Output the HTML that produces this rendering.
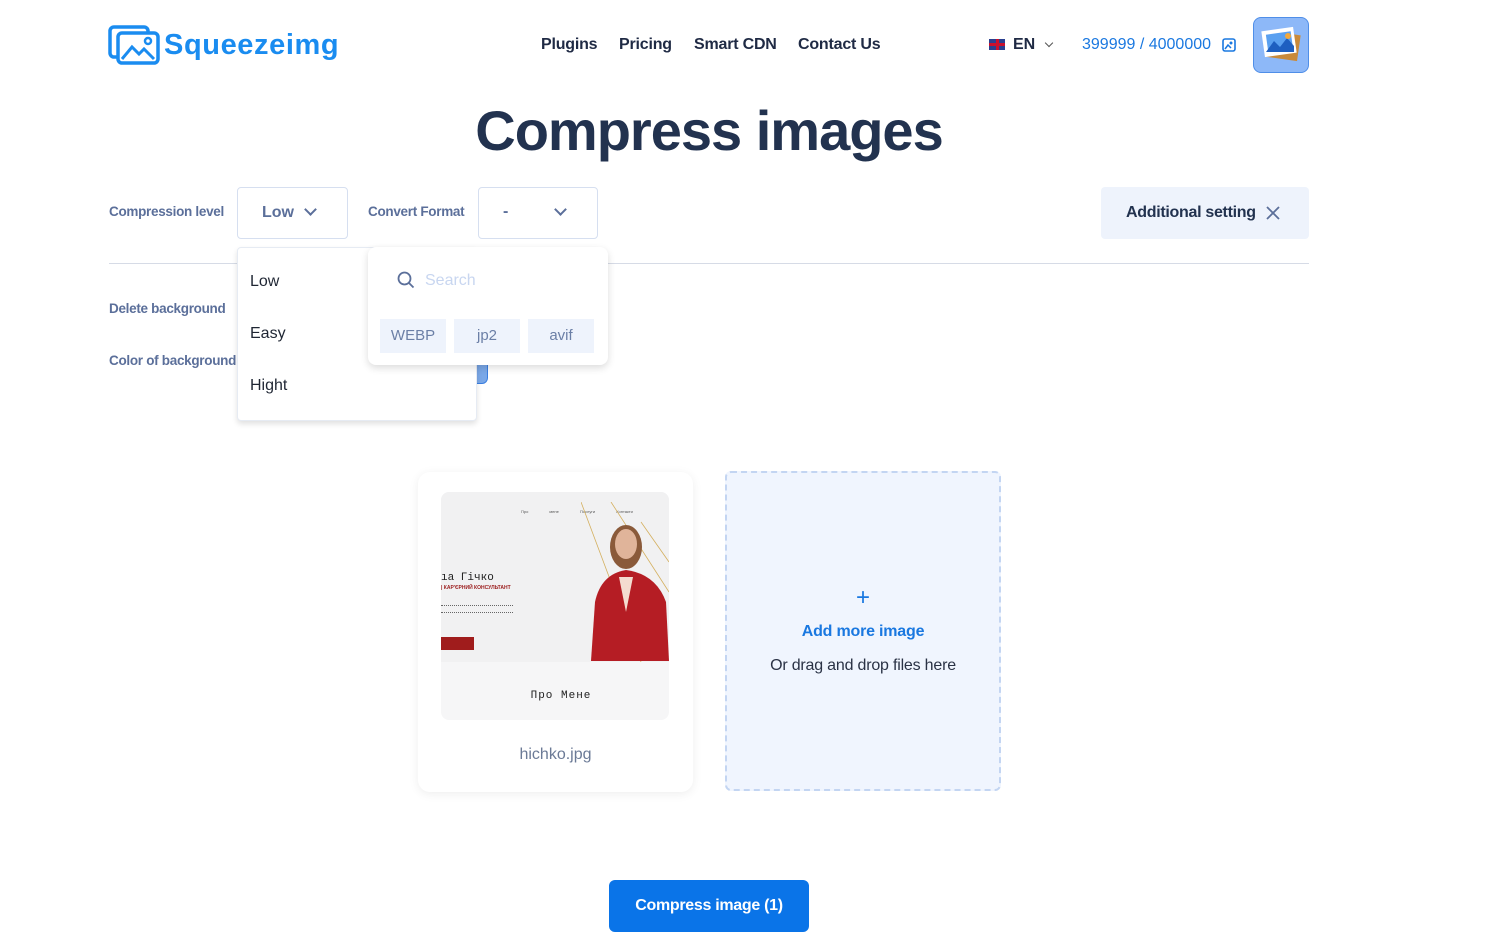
<!DOCTYPE html>
<html><head><meta charset="utf-8"><style>
*{box-sizing:border-box;margin:0;padding:0}
body{width:1486px;height:937px;background:#fff;font-family:"Liberation Sans",sans-serif;position:relative;overflow:hidden;color:#22304a}
.abs{position:absolute}
.nav a{position:absolute;top:36px;font-weight:bold;font-size:16px;color:#1f2a44;white-space:nowrap;letter-spacing:-0.2px}
.lbl{position:absolute;font-size:13.5px;color:#5b6f9a;font-weight:bold;white-space:nowrap;letter-spacing:-0.3px}
.sel{position:absolute;border:1px solid #d6dff0;border-radius:4px;background:#fff}
.chev{position:absolute;width:9px;height:9px;border-right:2px solid #5b6f9a;border-bottom:2px solid #5b6f9a;transform:rotate(45deg)}
.opt{position:absolute;left:12px;font-size:16px;color:#1f2633}
.tag{position:absolute;top:319px;width:66px;height:34px;background:#eef3fc;color:#6b7fa6;font-size:15px;text-align:center;line-height:34px}
</style></head><body>
<svg class="abs" style="left:108px;top:25px" width="52" height="40" viewBox="0 0 52 40"><rect x="2" y="2" width="38" height="30" rx="4" fill="none" stroke="#1a8cf0" stroke-width="3.5"/><rect x="10" y="8" width="40" height="30" rx="4" fill="#fff" stroke="#1a8cf0" stroke-width="3.5"/><path d="M14 34 L24 22 L31 29 L36 24 L46 34" fill="none" stroke="#1a8cf0" stroke-width="3"/><circle cx="40" cy="16" r="3" fill="none" stroke="#1a8cf0" stroke-width="2.5"/></svg>
<div class="abs" style="left:164px;top:29px;font-size:29px;font-weight:bold;color:#1a8cf0;letter-spacing:0.6px">Squeezeimg</div>
<div class="nav"><a style="left:541px">Plugins</a><a style="left:619px">Pricing</a><a style="left:694px">Smart CDN</a><a style="left:798px">Contact Us</a></div>
<div class="abs" style="left:989px;top:39px;width:16px;height:11px;background:linear-gradient(#c8102e,#c8102e) center/100% 3px no-repeat,linear-gradient(#c8102e,#c8102e) center/3px 100% no-repeat,#2a3f8f"></div>
<div class="abs" style="left:1013px;top:36px;font-size:16px;font-weight:bold;color:#1f2a44">EN</div>
<div class="chev" style="left:1046px;top:40px;width:6px;height:6px;border-width:1.5px;border-color:#555"></div>
<div class="abs" style="left:1082px;top:36px;font-size:16px;color:#1a78e0">399999 / 4000000</div>
<svg class="abs" style="left:1222px;top:38px" width="14" height="14"><rect x="1" y="1" width="12" height="12" rx="2" fill="none" stroke="#1a78e0" stroke-width="1.6"/><path d="M3 11 L6 7 L9 10" stroke="#1a78e0" fill="none" stroke-width="1.5"/><circle cx="9" cy="5" r="1.5" fill="#1a78e0"/></svg>
<div class="abs" style="left:1253px;top:17px;width:56px;height:56px;border-radius:8px;background:#8db8f8;border:1px solid #4f8ee8"></div>
<svg class="abs" style="left:1259px;top:25px" width="44" height="40"><rect x="8" y="8" width="32" height="26" fill="#c98a3a" transform="rotate(8 24 21)"/><rect x="4" y="4" width="32" height="26" fill="#fff" transform="rotate(-8 20 17)"/><rect x="8" y="8" width="25" height="17" fill="#5aa0f0" transform="rotate(-8 20 17)"/><path d="M7 27 L15 16 L21 22 L28 13 L35 21 L35 27 Z" fill="#1e5fc0"/><circle cx="29" cy="11" r="3" fill="#f3a83a"/></svg>
<div class="abs" style="left:0;width:1418px;top:98px;text-align:center;font-size:56px;font-weight:bold;color:#22324f;letter-spacing:-1px">Compress images</div>
<div class="lbl" style="left:109px;top:204px">Compression level</div>
<div class="sel" style="left:237px;top:187px;width:111px;height:52px"></div>
<div class="abs" style="left:262px;top:204px;font-size:16px;font-weight:bold;color:#5b6f9a">Low</div>
<div class="chev" style="left:306px;top:205px"></div>
<div class="lbl" style="left:368px;top:204px">Convert Format</div>
<div class="sel" style="left:478px;top:187px;width:120px;height:52px"></div>
<div class="abs" style="left:503px;top:203px;font-size:16px;font-weight:bold;color:#5b6f9a">-</div>
<div class="chev" style="left:556px;top:205px"></div>
<div class="abs" style="left:1101px;top:187px;width:208px;height:52px;background:#eef3fc;border-radius:4px"></div>
<div class="abs" style="left:1126px;top:204px;font-size:16px;font-weight:bold;color:#22324f;letter-spacing:-0.3px">Additional setting</div>
<svg class="abs" style="left:1265px;top:205px" width="16" height="16"><path d="M2 2L14 14M14 2L2 14" stroke="#5b6f9a" stroke-width="1.8"/></svg>
<div class="abs" style="left:109px;top:263px;width:1200px;height:1px;background:#d6dbe6"></div>
<div class="lbl" style="left:109px;top:301px">Delete background</div>
<div class="lbl" style="left:109px;top:353px">Color of background</div>
<div class="abs" style="left:470px;top:362px;width:18px;height:22px;background:#7aa8e8;border-radius:0 0 6px 0;border:1px solid #3a7ee0"></div>
<div class="abs" style="left:237px;top:247px;width:240px;height:174px;background:#fff;border:1px solid #e6ebf3;border-radius:4px;box-shadow:0 3px 6px rgba(0,0,0,.12)">
<div class="opt" style="top:25px">Low</div><div class="opt" style="top:77px">Easy</div><div class="opt" style="top:129px">Hight</div></div>
<div class="abs" style="left:368px;top:247px;width:240px;height:118px;background:#fff;border-radius:8px;box-shadow:0 3px 8px rgba(0,0,0,.14)"></div>
<svg class="abs" style="left:397px;top:271px" width="18" height="18"><circle cx="7.5" cy="7.5" r="6" fill="none" stroke="#5b6f9a" stroke-width="1.8"/><path d="M12 12L16.5 16.5" stroke="#5b6f9a" stroke-width="1.8"/></svg>
<div class="abs" style="left:425px;top:272px;font-size:16px;color:#c8d6f0">Search</div>
<div class="tag" style="left:380px">WEBP</div><div class="tag" style="left:454px">jp2</div><div class="tag" style="left:528px">avif</div>
<div class="abs" style="left:418px;top:472px;width:275px;height:320px;background:#fff;border-radius:12px;box-shadow:0 2px 10px rgba(0,0,0,.07)"></div>
<div class="abs" style="left:441px;top:492px;width:228px;height:228px;background:#f6f6f7;border-radius:8px;overflow:hidden">
<div class="abs" style="left:0;top:0;width:228px;height:170px;background:#f1f1f2"></div>
<div class="abs" style="left:80px;top:17px;font-size:4px;color:#555;word-spacing:20px">Про мене Послуги Контакти</div>
<svg class="abs" style="left:140px;top:10px" width="88" height="160"><path d="M0 0L60 160M30 0L88 90M60 20L88 60" stroke="#d4b060" stroke-width="0.8"/><ellipse cx="45" cy="45" rx="16" ry="22" fill="#8a5a3a"/><ellipse cx="45" cy="42" rx="11" ry="15" fill="#e0b49a"/><path d="M10 159 L14 100 Q20 72 45 68 Q75 72 85 100 L88 159Z" fill="#b51d24"/><path d="M38 75 L45 110 L52 75Z" fill="#f4dcd0"/></svg>
<div class="abs" style="left:0;top:80px;font-size:11px;font-family:'Liberation Mono',monospace;color:#222">ıа Гічко</div>
<div class="abs" style="left:0;top:93px;font-size:5px;font-weight:bold;color:#9b1c1c">| КАР'ЄРНИЙ КОНСУЛЬТАНТ</div>
<div class="abs" style="left:0;top:113px;width:72px;height:8px;border-top:1px dotted #666;border-bottom:1px dotted #666"></div>
<div class="abs" style="left:0;top:145px;width:33px;height:13px;background:#a01c1c"></div>
<div class="abs" style="left:0;top:198px;width:240px;text-align:center;font-size:11px;font-family:'Liberation Mono',monospace;color:#222;letter-spacing:1px">Про Мене</div>
</div>
<div class="abs" style="left:418px;top:746px;width:275px;text-align:center;font-size:16px;color:#6b7a96">hichko.jpg</div>
<div class="abs" style="left:725px;top:471px;width:276px;height:320px;background:#f0f5fe;border:2px dashed #c3d5f2;border-radius:6px"></div>
<div class="abs" style="left:725px;top:584px;width:276px;text-align:center;font-size:24px;color:#1a78e0">+</div>
<div class="abs" style="left:725px;top:623px;width:276px;text-align:center;font-size:16px;font-weight:bold;color:#1a78e0;letter-spacing:-0.2px">Add more image</div>
<div class="abs" style="left:725px;top:657px;width:276px;text-align:center;font-size:16px;color:#2a3245;letter-spacing:-0.2px">Or drag and drop files here</div>
<div class="abs" style="left:609px;top:880px;width:200px;height:52px;background:#0a74e8;border-radius:6px;color:#fff;font-weight:bold;font-size:16px;text-align:center;line-height:52px;letter-spacing:-0.3px">Compress image (1)</div>
</body></html>
